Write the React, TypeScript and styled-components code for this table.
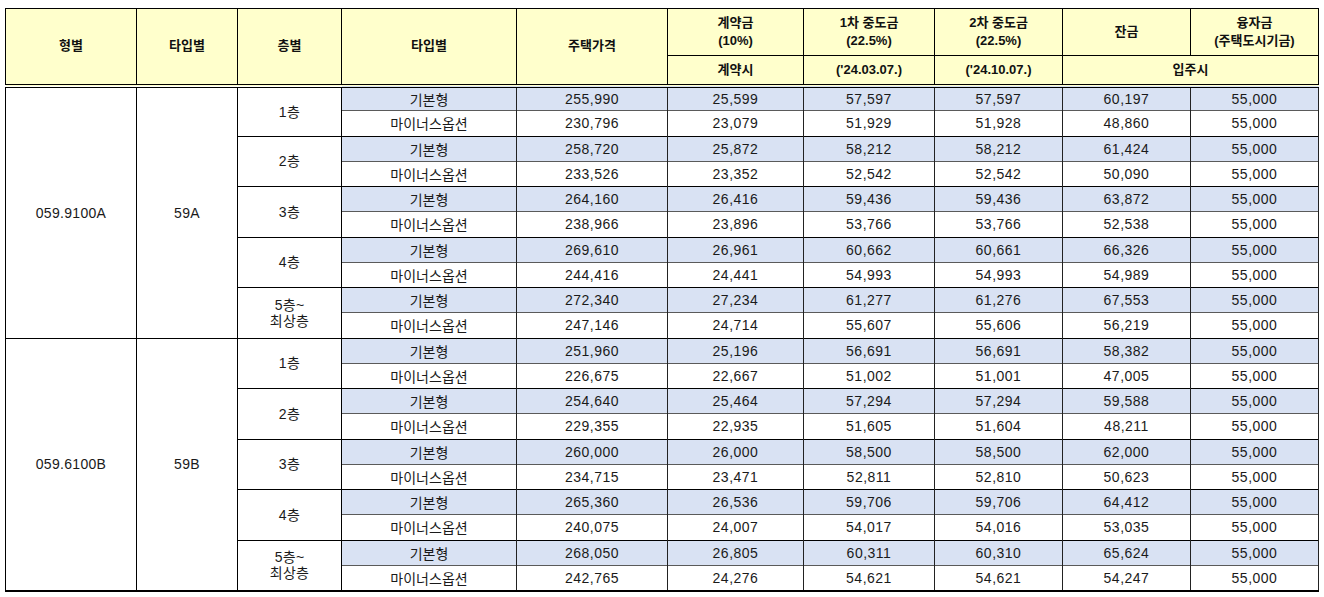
import React from 'react';
import styled, { createGlobalStyle } from 'styled-components';

type Row = [string, string, string, string, string, string];

interface Floor {
  label: string[];
  base: Row;
  minus: Row;
}

interface Group {
  code: string;
  type: string;
  floors: Floor[];
}

const groups: Group[] = [
  {
    code: '059.9100A',
    type: '59A',
    floors: [
      { label: ['1층'], base: ['255,990', '25,599', '57,597', '57,597', '60,197', '55,000'], minus: ['230,796', '23,079', '51,929', '51,928', '48,860', '55,000'] },
      { label: ['2층'], base: ['258,720', '25,872', '58,212', '58,212', '61,424', '55,000'], minus: ['233,526', '23,352', '52,542', '52,542', '50,090', '55,000'] },
      { label: ['3층'], base: ['264,160', '26,416', '59,436', '59,436', '63,872', '55,000'], minus: ['238,966', '23,896', '53,766', '53,766', '52,538', '55,000'] },
      { label: ['4층'], base: ['269,610', '26,961', '60,662', '60,661', '66,326', '55,000'], minus: ['244,416', '24,441', '54,993', '54,993', '54,989', '55,000'] },
      { label: ['5층~', '최상층'], base: ['272,340', '27,234', '61,277', '61,276', '67,553', '55,000'], minus: ['247,146', '24,714', '55,607', '55,606', '56,219', '55,000'] },
    ],
  },
  {
    code: '059.6100B',
    type: '59B',
    floors: [
      { label: ['1층'], base: ['251,960', '25,196', '56,691', '56,691', '58,382', '55,000'], minus: ['226,675', '22,667', '51,002', '51,001', '47,005', '55,000'] },
      { label: ['2층'], base: ['254,640', '25,464', '57,294', '57,294', '59,588', '55,000'], minus: ['229,355', '22,935', '51,605', '51,604', '48,211', '55,000'] },
      { label: ['3층'], base: ['260,000', '26,000', '58,500', '58,500', '62,000', '55,000'], minus: ['234,715', '23,471', '52,811', '52,810', '50,623', '55,000'] },
      { label: ['4층'], base: ['265,360', '26,536', '59,706', '59,706', '64,412', '55,000'], minus: ['240,075', '24,007', '54,017', '54,016', '53,035', '55,000'] },
      { label: ['5층~', '최상층'], base: ['268,050', '26,805', '60,311', '60,310', '65,624', '55,000'], minus: ['242,765', '24,276', '54,621', '54,621', '54,247', '55,000'] },
    ],
  },
];

const colWidths = [131, 101, 104, 175, 151, 136, 131, 128, 128, 128];

const GlobalStyle = createGlobalStyle`
  body {
    margin: 0;
    background: #fff;
    font-family: "Liberation Sans", "Noto Sans CJK KR", sans-serif;
  }
`;

const Page = styled.div`
  padding: 8px 0 0 5px;
`;

const Table = styled.table`
  border-collapse: collapse;
  table-layout: fixed;
  width: 1313px;
  border: 1px solid #000;
  border-bottom-width: 2px;
  font-size: 14px;
  color: #1a1a1a;
`;

const HeadRow = styled.tr<{ $h: number }>`
  height: ${p => p.$h}px;
`;

const HeadCell = styled.th<{ $double?: boolean }>`
  background: #ffffcc;
  border: 1px solid #000;
  border-bottom: ${p => (p.$double ? '4px double #000' : '1px solid #000')};
  font-weight: bold;
  font-size: 13px;
  line-height: 18px;
  color: #111;
  text-align: center;
  vertical-align: middle;
  padding: 0;
`;

const BodyRow = styled.tr`
  height: 25.25px;
`;

const SpanCell = styled.td`
  border: 1px solid #000;
  background: #fff;
  text-align: center;
  vertical-align: middle;
  line-height: 16px;
  padding: 0;
  letter-spacing: 0.3px;
`;

const DataCell = styled.td<{ $blue?: boolean; $top: 'black' | 'gray'; $num?: boolean }>`
  background: ${p => (p.$blue ? '#d9e2f3' : '#fff')};
  border-left: 1px solid #222;
  border-right: 1px solid #222;
  border-top: 1px solid ${p => (p.$top === 'black' ? '#000' : '#5a5a5a')};
  border-bottom: none;
  text-align: center;
  vertical-align: middle;
  padding: 0;
  white-space: nowrap;
  letter-spacing: ${p => (p.$num ? '0.5px' : '0')};
`;

const DataRows: React.FC<{ group: Group }> = ({ group }) => (
  <>
    {group.floors.map((floor, fi) => (
      <React.Fragment key={fi}>
        <BodyRow>
          {fi === 0 && (
            <>
              <SpanCell rowSpan={10}>{group.code}</SpanCell>
              <SpanCell rowSpan={10}>{group.type}</SpanCell>
            </>
          )}
          <SpanCell rowSpan={2}>
            {floor.label.map((l, i) => (
              <div key={i}>{l}</div>
            ))}
          </SpanCell>
          <DataCell $blue $top="black">기본형</DataCell>
          {floor.base.map((v, i) => (
            <DataCell key={i} $blue $num $top="black">
              {v}
            </DataCell>
          ))}
        </BodyRow>
        <BodyRow>
          <DataCell $top="gray">마이너스옵션</DataCell>
          {floor.minus.map((v, i) => (
            <DataCell key={i} $num $top="gray">
              {v}
            </DataCell>
          ))}
        </BodyRow>
      </React.Fragment>
    ))}
  </>
);

const App: React.FC = () => (
  <Page>
    <GlobalStyle />
    <Table>
      <colgroup>
        {colWidths.map((w, i) => (
          <col key={i} style={{ width: w }} />
        ))}
      </colgroup>
      <thead>
        <HeadRow $h={47}>
          <HeadCell rowSpan={2} $double>형별</HeadCell>
          <HeadCell rowSpan={2} $double>타입별</HeadCell>
          <HeadCell rowSpan={2} $double>층별</HeadCell>
          <HeadCell rowSpan={2} $double>타입별</HeadCell>
          <HeadCell rowSpan={2} $double>주택가격</HeadCell>
          <HeadCell>
            계약금
            <br />
            (10%)
          </HeadCell>
          <HeadCell>
            1차 중도금
            <br />
            (22.5%)
          </HeadCell>
          <HeadCell>
            2차 중도금
            <br />
            (22.5%)
          </HeadCell>
          <HeadCell>잔금</HeadCell>
          <HeadCell>
            융자금
            <br />
            (주택도시기금)
          </HeadCell>
        </HeadRow>
        <HeadRow $h={30}>
          <HeadCell $double>계약시</HeadCell>
          <HeadCell $double>('24.03.07.)</HeadCell>
          <HeadCell $double>('24.10.07.)</HeadCell>
          <HeadCell $double colSpan={2}>
            입주시
          </HeadCell>
        </HeadRow>
      </thead>
      <tbody>
        {groups.map(g => (
          <DataRows key={g.code} group={g} />
        ))}
      </tbody>
    </Table>
  </Page>
);

export default App;
